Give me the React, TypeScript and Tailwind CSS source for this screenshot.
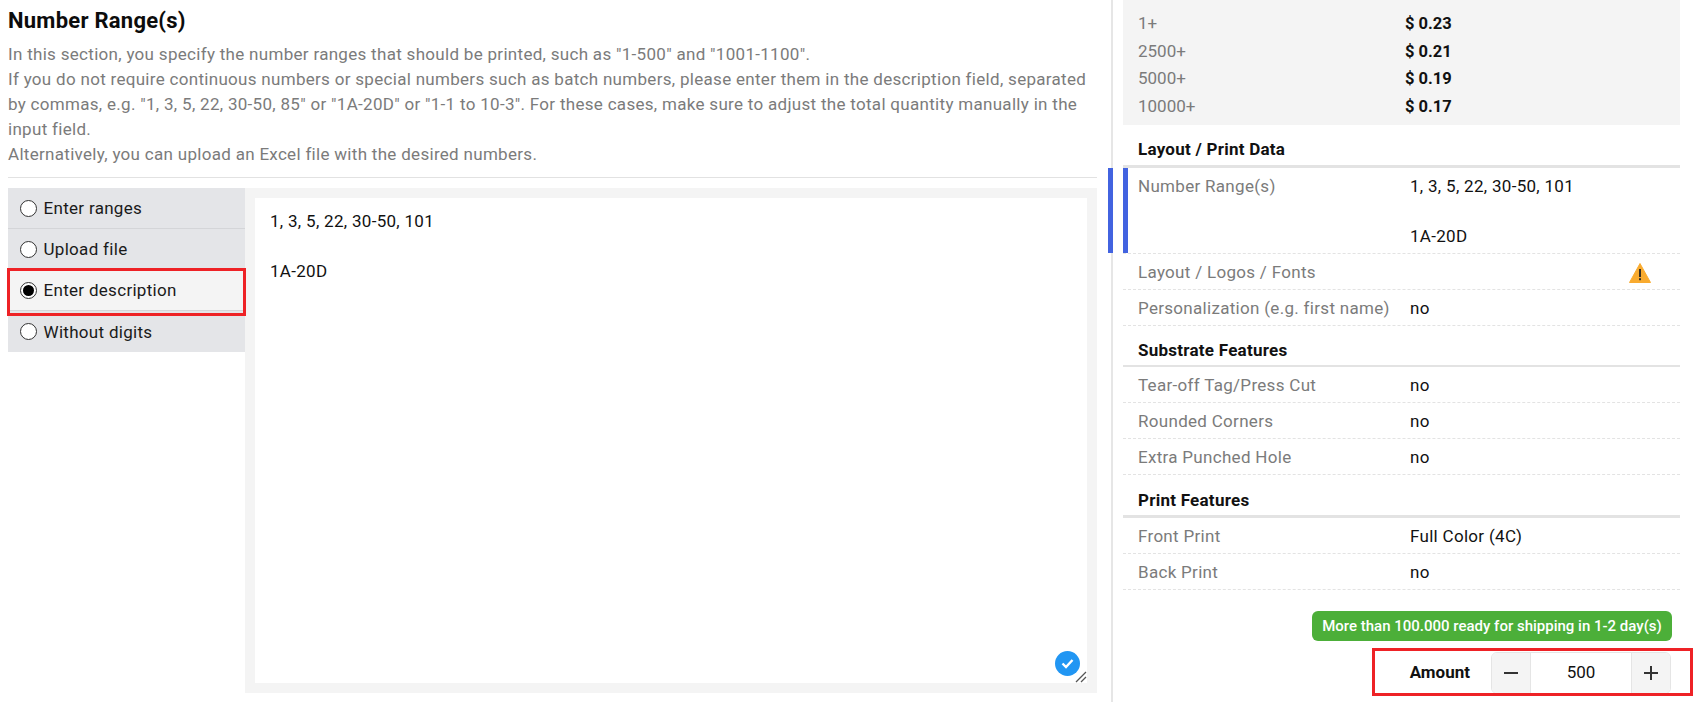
import React from "react";

function Radio({ checked }: { checked?: boolean }) {
  return (
    <span className="w-[17px] h-[17px] rounded-full border border-[#333] bg-white flex items-center justify-center shrink-0">
      {checked && <span className="w-[11px] h-[11px] rounded-full bg-black" />}
    </span>
  );
}

function Option({ label, checked }: { label: string; checked?: boolean }) {
  return (
    <div className={`h-[41px] flex items-center gap-[6.5px] pl-[12px] border-b border-[#d4d5d8] last:border-b-0 ${checked ? "bg-[#f4f4f4]" : "bg-[#e4e5e8]"}`}>
      <Radio checked={checked} />
      <span className="mt-[2px] text-[17px] tracking-[0.3px] text-[#1a1a1a]">{label}</span>
    </div>
  );
}

function Row({ label, value, icon }: { label: string; value?: React.ReactNode; icon?: boolean }) {
  return (
    <div className="h-[36px] flex items-center border-b border-dashed border-[#e3e3e3] pl-[15px] pt-[2px] text-[17px] tracking-[0.3px]">
      <span className="w-[272px] text-[#7b7b7b] shrink-0 whitespace-nowrap">{label}</span>
      <span className="text-[#111] flex-1">{value}</span>
      {icon && (
        <svg width="22" height="20" viewBox="0 0 22 20" className="mr-[29px]">
          <path d="M11 0.5 L21.5 19.5 L0.5 19.5 Z" fill="#f9ab2f" stroke="#f9ab2f" strokeLinejoin="round" />
          <rect x="10.1" y="6" width="1.8" height="8" fill="#222" />
          <rect x="10.1" y="15.2" width="1.8" height="2" fill="#222" />
        </svg>
      )}
    </div>
  );
}

function Heading({ children, box }: { children: string; box: string }) {
  return (
    <div className={`${box} flex items-end pl-[15px] text-[17px] tracking-[0.25px] leading-[24px] font-bold text-[#111] border-[#e3e3e3]`}>
      {children}
    </div>
  );
}

const prices = [
  ["1+", "$ 0.23"],
  ["2500+", "$ 0.21"],
  ["5000+", "$ 0.19"],
  ["10000+", "$ 0.17"],
];

export default function App() {
  return (
    <div className="relative w-[1694px] h-[702px] overflow-hidden bg-white flex font-['Roboto',sans-serif]">
      {/* left column */}
      <div className="w-[1089px] ml-[8px] shrink-0 flex flex-col">
        <h1 className="text-[22px] tracking-[0.25px] leading-[28px] font-bold text-[#0c0c0c] mt-[7px]">Number Range(s)</h1>
        <div className="mt-[7px] text-[17px] tracking-[0.3px] leading-[25px] text-[#7b7b7b] border-b border-[#e2e2e2] h-[136px]">
          <p>In this section, you specify the number ranges that should be printed, such as "1-500" and "1001-1100".</p>
          <p>If you do not require continuous numbers or special numbers such as batch numbers, please enter them in the description field, separated by commas, e.g. "1, 3, 5, 22, 30-50, 85" or "1A-20D" or "1-1 to 10-3". For these cases, make sure to adjust the total quantity manually in the input field.</p>
          <p>Alternatively, you can upload an Excel file with the desired numbers.</p>
        </div>
        <div className="mt-[10px] flex items-start h-[505px]">
          <div className="w-[237px] shrink-0">
            <Option label="Enter ranges" />
            <Option label="Upload file" />
            <Option label="Enter description" checked />
            <Option label="Without digits" />
          </div>
          <div className="flex-1 h-full bg-[#f4f4f4] p-[10px]">
            <div className="relative h-full bg-white pl-[15px] pr-[16px] pt-[11px] text-[17px] tracking-[0.3px] leading-[25px] text-[#111]">
              <div>1, 3, 5, 22, 30-50, 101</div>
              <div className="h-[25px]" />
              <div>1A-20D</div>
              <span className="absolute right-[7px] bottom-[7px] w-[25px] h-[25px] rounded-full bg-[#2196f3] flex items-center justify-center">
                <svg width="13" height="11" viewBox="0 0 13 11" fill="none">
                  <path d="M1.5 5.5 L5 9 L11.5 2" stroke="#fff" strokeWidth="2.4" />
                </svg>
              </span>
              <svg width="12" height="12" viewBox="0 0 12 12" className="absolute right-0 bottom-0" fill="none">
                <path d="M1 11 L11 1 M6 11 L11 6" stroke="#555" strokeWidth="1.3" />
              </svg>
            </div>
          </div>
        </div>
      </div>

      {/* divider */}
      <div className="relative ml-[14px] w-[2px] h-full bg-[#e6e6e6] shrink-0">
        <div className="absolute left-[-3px] top-[168px] w-[5px] h-[85px] bg-[#4263e0]" />
      </div>

      {/* right column */}
      <div className="ml-[10px] w-[557px] shrink-0">
        <div className="h-[125px] bg-[#f4f4f4] pl-[15px] pt-[10px] text-[17px] leading-[27.6px]">
          {prices.map(([q, p]) => (
            <div key={q} className="flex">
              <span className="w-[267px] text-[#7b7b7b]">{q}</span>
              <span className="font-bold text-[#111] text-[16.5px]">{p}</span>
            </div>
          ))}
        </div>
        <Heading box="h-[43px] pb-[4px] border-b-[3px]">Layout / Print Data</Heading>
        <div className="relative">
          <div className="absolute left-0 top-0 w-[5px] h-[85px] bg-[#4263e0]" />
          <div className="h-[86px] flex border-b border-dashed border-[#e3e3e3] pl-[15px] pt-[6px] text-[17px] tracking-[0.3px] leading-[25px]">
            <span className="w-[272px] text-[#7b7b7b] shrink-0">Number Range(s)</span>
            <span className="text-[#111]">
              1, 3, 5, 22, 30-50, 101
              <br />
              <br />
              1A-20D
            </span>
          </div>
        </div>
        <Row label="Layout / Logos / Fonts" icon />
        <Row label="Personalization (e.g. first name)" value="no" />
        <Heading box="h-[41px] pb-[3px] border-b-2">Substrate Features</Heading>
        <Row label="Tear-off Tag/Press Cut" value="no" />
        <Row label="Rounded Corners" value="no" />
        <Row label="Extra Punched Hole" value="no" />
        <Heading box="h-[43px] pb-[3px] border-b-[3px]">Print Features</Heading>
        <Row label="Front Print" value="Full Color (4C)" />
        <Row label="Back Print" value="no" />
        <div className="flex justify-end pr-[8px] mt-[21px]">
          <div className="h-[30px] w-[360px] rounded-[6px] bg-[#4caf39] flex items-center justify-center text-[15px] font-medium text-white">
            More than 100.000 ready for shipping in 1-2 day(s)
          </div>
        </div>
        <div className="flex justify-end items-center pr-[9px] mt-[11px]">
          <span className="text-[17px] font-bold text-[#111] mr-[21px]">Amount</span>
          <div className="h-[42px] w-[180px] flex rounded-[6px] border border-[#e5e5e5] overflow-hidden">
            <span className="w-[39px] bg-[#f4f4f4] border-r border-[#e5e5e5] flex items-center justify-center">
              <span className="w-[14px] h-[2px] bg-[#333]" />
            </span>
            <span className="flex-1 flex items-center justify-center text-[17px] text-[#111]">500</span>
            <span className="w-[39px] bg-[#f4f4f4] border-l border-[#e5e5e5] flex items-center justify-center relative">
              <span className="w-[14px] h-[2px] bg-[#333]" />
              <span className="absolute w-[2px] h-[14px] bg-[#333]" />
            </span>
          </div>
        </div>
      </div>

      {/* annotation frames */}
      <div className="absolute left-[7px] top-[268px] w-[239px] h-[48px] border-[3px] border-[#ee2226]" />
      <div className="absolute left-[1372px] top-[648px] w-[321px] h-[48px] border-[3px] border-[#ee2226]" />
    </div>
  );
}
